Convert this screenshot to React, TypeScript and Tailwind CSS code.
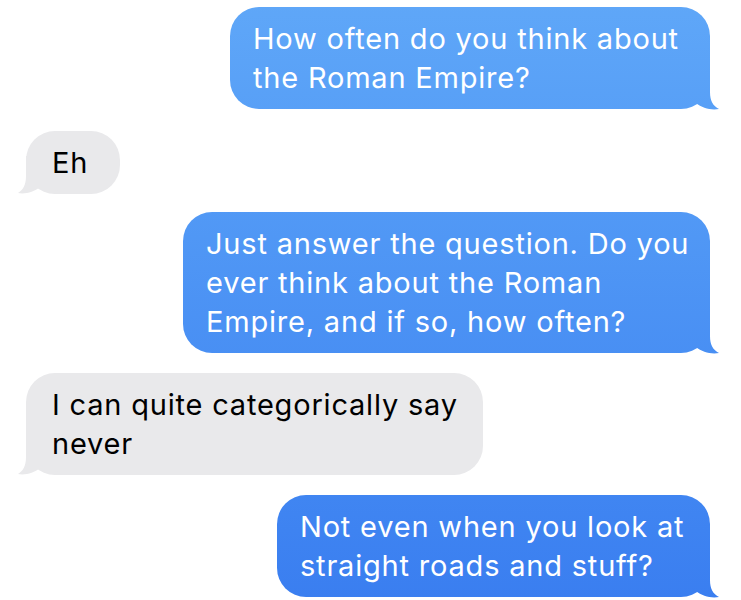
import React from "react";

type Side = "left" | "right";

function Tail({ side }: { side: Side }) {
  if (side === "right") {
    return (
      <div className="absolute right-[-10px] bottom-[-3px] w-[40px] h-[40px] bg-linear-to-b from-[#5fa7f8] to-[#3a7ef0] bg-fixed [clip-path:path('M0_0_L30_0_L30_20_C30_29_33_34_39_37_C31_38.5_22_36_16_31_C12_33.5_6_34.5_0_34.5_Z')]" />
    );
  }
  return (
    <div className="absolute left-[-8px] bottom-[-2px] w-[40px] h-[40px] bg-[#e9e9eb] [clip-path:path('M40_0_L8_0_L8_20_C8_29_5_34_0_37_C7_38.5_16_36_22_31_C27_33.5_33_34.5_40_34.5_Z')]" />
  );
}

function Bubble({
  side,
  width,
  lines,
  mt,
}: {
  side: Side;
  width: string;
  lines: string[];
  mt: string;
}) {
  const sent = side === "right";
  return (
    <div className={`flex ${sent ? "justify-end pr-[31px]" : "justify-start pl-[26px]"} ${mt}`}>
      <div
        className={`relative rounded-[29px] py-3 ${width} ${
          sent
            ? "pl-[23px] text-white bg-linear-to-b from-[#5fa7f8] to-[#3a7ef0] bg-fixed"
            : "pl-[26px] text-black bg-[#e9e9eb]"
        }`}
      >
        <Tail side={side} />
        <div className="relative text-[29px] leading-[39px] tracking-[0.8px] whitespace-nowrap">
          {lines.map((l, i) => (
            <div key={i}>{l}</div>
          ))}
        </div>
      </div>
    </div>
  );
}

export default function App() {
  return (
    <div
      className="w-[741px] h-[600px] overflow-hidden bg-white flex flex-col"
      style={{ fontFamily: "Inter, 'Liberation Sans', sans-serif" }}
    >
      <Bubble
        side="right"
        width="w-[480px]"
        mt="mt-[7px]"
        lines={["How often do you think about", "the Roman Empire?"]}
      />
      <Bubble side="left" width="w-[94px]" mt="mt-[22px]" lines={["Eh"]} />
      <Bubble
        side="right"
        width="w-[527px]"
        mt="mt-[18px]"
        lines={[
          "Just answer the question. Do you",
          "ever think about the Roman",
          "Empire, and if so, how often?",
        ]}
      />
      <Bubble
        side="left"
        width="w-[457px]"
        mt="mt-[20px]"
        lines={["I can quite categorically say", "never"]}
      />
      <Bubble
        side="right"
        width="w-[433px]"
        mt="mt-[20px]"
        lines={["Not even when you look at", "straight roads and stuff?"]}
      />
    </div>
  );
}
